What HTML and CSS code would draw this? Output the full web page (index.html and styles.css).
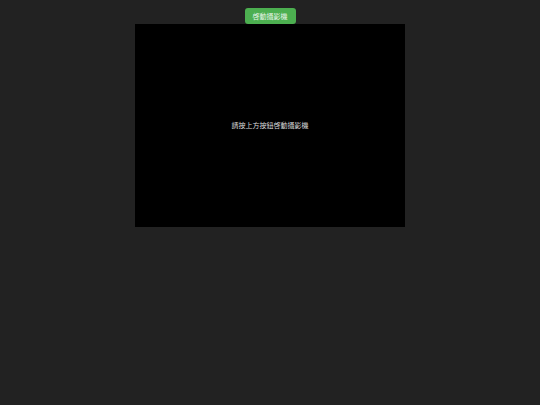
FILE: index.html
```html
<!DOCTYPE html>
<html lang="zh-Hant">
<head>
<meta charset="utf-8">
<link rel="stylesheet" href="styles.css">
</head>
<body>
<div class="page">
  <button class="start-btn">啓動攝影機</button>
  <div class="video-box">
    <span class="hint">請按上方按鈕啓動攝影機</span>
  </div>
</div>
</body>
</html>
```
FILE: styles.css
```css
html, body {
  margin: 0;
  padding: 0;
  background: #222222;
  height: 100%;
}
.page {
  display: flex;
  flex-direction: column;
  align-items: center;
  padding-top: 8px;
  font-family: "Noto Sans CJK TC", "Noto Sans", sans-serif;
}
.start-btn {
  height: 16px;
  width: 51px;
  padding: 0;
  border: none;
  border-radius: 3px;
  background: #4caf50;
  color: #e8f5e9;
  font-family: "Noto Sans CJK TC", sans-serif;
  font-size: 7px;
  line-height: 16px;
}
.video-box {
  width: 270px;
  height: 203px;
  background: #000000;
  display: flex;
  align-items: center;
  justify-content: center;
}
.hint {
  color: #d8d8d8;
  font-size: 7px;
  margin-bottom: 2px;
}
```
